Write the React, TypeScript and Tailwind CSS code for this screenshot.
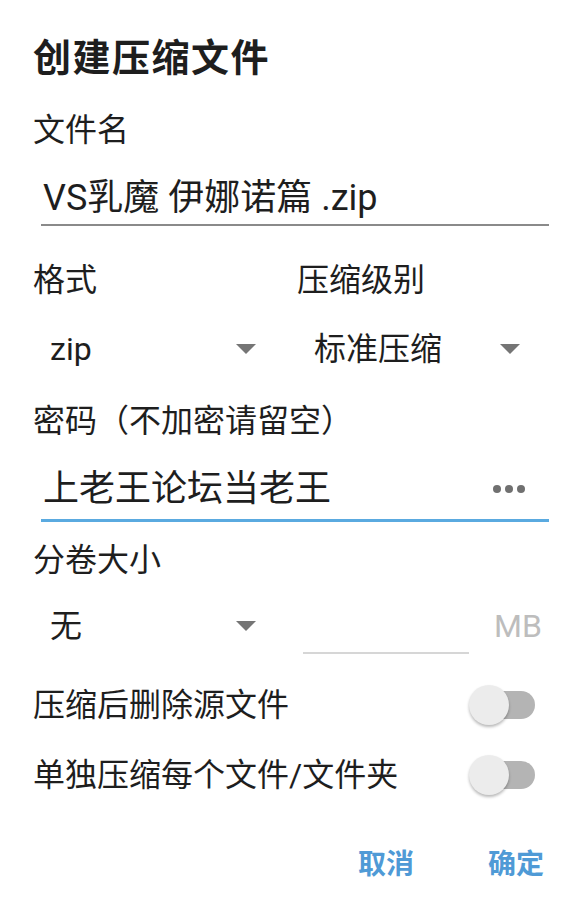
import React from 'react';

const font = { fontFamily: 'Roboto, "Noto Sans CJK SC", sans-serif' };

function Arrow() {
  return (
    <svg width="20" height="10" viewBox="0 0 20 10" className="shrink-0">
      <polygon points="0,0 20,0 10,10" fill="#757575" />
    </svg>
  );
}

function Spinner({ value }: { value: string }) {
  return (
    <div className="flex h-full items-center justify-between pl-[17px] pr-[29px]">
      <span className="text-[32px] text-[#1e1e1e]">{value}</span>
      <Arrow />
    </div>
  );
}

function Toggle() {
  return (
    <div className="relative h-[28px] w-[64px] rounded-full bg-[#b4b4b4]">
      <div className="absolute left-[-2px] top-1/2 h-[40px] w-[40px] -translate-y-1/2 rounded-full bg-[#ececec] shadow-[0_2px_3px_rgba(0,0,0,0.28)]" />
    </div>
  );
}

const switches = ['压缩后删除源文件', '单独压缩每个文件/文件夹'];

export default function App() {
  return (
    <div className="h-[912px] w-[585px] overflow-hidden bg-white" style={font}>
      <div className="flex flex-col pl-[33px] pr-[36px] pt-[22px] text-[#1e1e1e]">
        <div className="flex h-[72px] items-center text-[38px] font-bold tracking-[1.5px]">
          创建压缩文件
        </div>

        <div className="flex h-[72px] items-center text-[32px]">文件名</div>

        <div className="ml-[8px] flex h-[60px] items-center border-b-2 border-[#8a8a8a] pl-[2px] pt-[6px] text-[36px]">
          VS乳魔 伊娜诺篇 .zip
        </div>

        <div className="mt-[20px] grid h-[68px] grid-cols-2 items-center gap-3 text-[32px]">
          <span>格式</span>
          <span>压缩级别</span>
        </div>

        <div className="grid h-[70px] grid-cols-2 gap-3">
          <Spinner value="zip" />
          <Spinner value="标准压缩" />
        </div>

        <div className="flex h-[74px] items-center text-[32px]">密码（不加密请留空）</div>

        <div className="ml-[8px] flex h-[64px] items-center justify-between border-b-[3px] border-[#5aaae0] pl-[2px] pr-[24px]">
          <span className="text-[36px]">上老王论坛当老王</span>
          <div className="flex gap-[4px]">
            <div className="h-[8px] w-[8px] rounded-full bg-[#707070]" />
            <div className="h-[8px] w-[8px] rounded-full bg-[#707070]" />
            <div className="h-[8px] w-[8px] rounded-full bg-[#707070]" />
          </div>
        </div>

        <div className="flex h-[76px] items-center text-[32px]">分卷大小</div>

        <div className="grid h-[56px] grid-cols-2 gap-3">
          <Spinner value="无" />
          <div className="flex h-full items-center">
            <div className="ml-[6px] h-full w-[166px] border-b-2 border-[#d6d6d6]" />
            <span className="ml-[25px] text-[32px] text-[#bdbdbd]">MB</span>
          </div>
        </div>

        <div className="mt-[16px] flex flex-col">
          {switches.map((label) => (
            <div key={label} className="flex h-[70px] items-center justify-between pr-[14px]">
              <span className="text-[32px]">{label}</span>
              <Toggle />
            </div>
          ))}
        </div>

        <div className="mt-[20px] flex h-[70px] items-center justify-end gap-[74px] pr-[5px] text-[28px] font-bold text-[#4f9ad6]">
          <span>取消</span>
          <span>确定</span>
        </div>
      </div>
    </div>
  );
}
